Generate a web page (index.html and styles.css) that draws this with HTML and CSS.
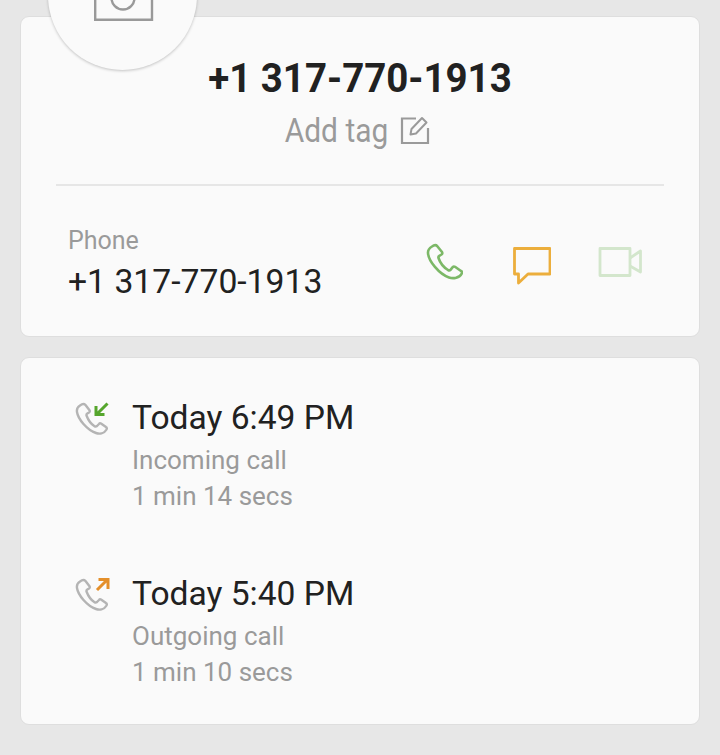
FILE: index.html
```html
<!DOCTYPE html>
<html lang="en">
<head>
<meta charset="utf-8">
<title>Call details</title>
<link rel="stylesheet" href="styles.css">
</head>
<body>
<main class="page">
  <section class="card contact">
    <div class="avatar">
      <svg class="avatar-icon" width="60" height="24" viewBox="0 0 60 24" fill="none" stroke="#999" stroke-width="2.4"><path d="M1.200 -10V20.800H58V-10"/><circle cx="29" cy="-1" r="11.500"/></svg>
    </div>
    <h1 class="number">+1 317-770-1913</h1>
    <div class="tag">
      <span>Add tag</span>
      <svg width="30" height="30" viewBox="0 0 30 30" fill="none" stroke="#9a9a9a" stroke-width="2.200"><path d="M16 3.500H2V28H28V13"/><path d="M10.500 19.500L11.500 14L22 3L26.500 7.500L16 18.500Z" stroke-width="2" stroke-linejoin="round"/></svg>
    </div>
    <div class="divider"></div>
    <div class="phone">
      <div class="phone-text">
        <div class="phone-label">Phone</div>
        <div class="phone-number">+1 317-770-1913</div>
      </div>
      <div class="actions">
        <svg class="act-phone" width="38" height="38" viewBox="0 0 38 38" fill="none" stroke="#7cb867" stroke-width="2.600" stroke-linejoin="round"><path d="M7 3.500C4.500 5 2.800 7 3 10C3.500 18 14 31 24 34.500C27 35.500 34 36 36.800 30.500C37.500 29.500 37 28.500 36 28L30 23.800C29 23.200 28.300 23.500 27.700 24.200L25.500 26.800C24.800 27.500 24 27.500 23 27C19 24.500 15 19.500 13.500 15C13.200 14 13.500 13.300 14.300 12.800L16.500 11.500C17.500 10.800 17.500 10 17 9L12.300 3.200C11 1.800 9 2 7 3.500Z"/></svg>
        <svg class="act-msg" width="38" height="38" viewBox="0 0 38 38" fill="none" stroke="#ecae3c" stroke-width="2.800" stroke-linejoin="round"><path d="M1.500 1.500H37V27H15L5.500 36V27H1.500Z"/></svg>
        <svg class="act-video" width="44" height="30" viewBox="0 0 44 30" fill="none" stroke="#d3e6cc" stroke-width="2.800" stroke-linejoin="round"><path d="M2 1.500H32V28.500H2Z"/><path d="M32 11L42.500 4V25L32 19"/></svg>
      </div>
    </div>
  </section>
  <section class="card log">
    <article class="call">
      <svg class="call-icon" width="36" height="36" viewBox="0 0 36 36" fill="none" stroke-linejoin="round"><path stroke="#b4b4b4" stroke-width="2.400" d="M5 4.500C2.500 6 1.500 8 2 11C3 18 12 29 21 32C24 33 29 33 31.500 28.500C32 27.500 32 26.500 31 26L26 22.500C25 22 24.500 22.300 24 23L22 25C21 25.800 20.500 25.800 19.500 25.200C16 23 13 18.500 11.500 14.500C11.300 13.500 11.500 13 12.300 12.500L14 11.500C15 10.800 15 10 14.500 9.300L10.500 4C9.300 2.800 7 3 5 4.500Z"/><path stroke="#56a62d" stroke-width="3" d="M32.500 2.500L22 13M21 5V13.500H29.500" stroke-linejoin="miter"/></svg>
      <div class="call-text">
        <div class="call-time">Today 6:49 PM</div>
        <div class="call-meta">Incoming call</div>
        <div class="call-meta">1 min 14 secs</div>
      </div>
    </article>
    <article class="call">
      <svg class="call-icon" width="36" height="36" viewBox="0 0 36 36" fill="none" stroke-linejoin="round"><path stroke="#b4b4b4" stroke-width="2.400" d="M5 4.500C2.500 6 1.500 8 2 11C3 18 12 29 21 32C24 33 29 33 31.500 28.500C32 27.500 32 26.500 31 26L26 22.500C25 22 24.500 22.300 24 23L22 25C21 25.800 20.500 25.800 19.500 25.200C16 23 13 18.500 11.500 14.500C11.300 13.500 11.500 13 12.300 12.500L14 11.500C15 10.800 15 10 14.500 9.300L10.500 4C9.300 2.800 7 3 5 4.500Z"/><path stroke="#e48f2a" stroke-width="3" d="M22 13L32 3M23.500 2.500H33V12" stroke-linejoin="miter"/></svg>
      <div class="call-text">
        <div class="call-time">Today 5:40 PM</div>
        <div class="call-meta">Outgoing call</div>
        <div class="call-meta">1 min 10 secs</div>
      </div>
    </article>
  </section>
</main>
</body>
</html>
```
FILE: styles.css
```css
* { box-sizing: border-box; }
html, body { margin: 0; height: 755px; overflow: hidden; }
body { background: #e7e7e7; font-family: Roboto, "Liberation Sans", sans-serif; color: #212121; }
.page { display: flex; flex-direction: column; gap: 20px; padding: 16px 20px 0; }
.card { background: #fafafa; border: 1px solid #dedede; border-radius: 9px; }
.contact { position: relative; height: 321px; padding: 0 35px; }
.avatar { position: absolute; left: 27px; top: -96px; width: 149px; height: 149px; border-radius: 50%; background: #fafafa; box-shadow: 0 1px 3px rgba(0,0,0,.22); overflow: hidden; }
.avatar-icon { position: absolute; left: 46px; top: 78px; overflow: visible; }
.number { margin: 36px 0 0; height: 50px; text-align: center; font-size: 41px; line-height: 50px; font-weight: 700; white-space: nowrap; transform: scaleX(.938); }
.tag { display: flex; justify-content: center; align-items: center; gap: 12px; height: 44px; margin-top: 5px; margin-left: -4px; color: #9a9a9a; font-size: 33px; }
.tag span { display: inline-block; transform: scaleX(.906); transform-origin: right center; margin-left: -12px; }
.divider { height: 2px; background: #e6e6e6; margin-top: 32px; }
.phone { display: flex; justify-content: space-between; align-items: center; padding: 38px 22px 0 12px; }
.phone-label { font-size: 25px; line-height: 32px; color: #9a9a9a; margin-top: 1px; }
.phone-number { font-size: 33.7px; line-height: 44px; color: #212121; margin-top: 3px; }
.actions { display: flex; align-items: flex-start; gap: 50px; }
.act-msg { margin-top: 4px; }
.act-video { margin-top: 4px; margin-left: -3px; }
.log { height: 368px; padding: 40px 0 0 54px; display: flex; flex-direction: column; gap: 60px; }
.call { display: flex; gap: 21px; }
.call-icon { flex: none; margin-top: 3px; }
.call-time { font-size: 33.6px; line-height: 40px; color: #212121; margin-bottom: 4px; }
.call-meta { font-size: 26px; line-height: 36px; color: #9a9a9a; }
```
